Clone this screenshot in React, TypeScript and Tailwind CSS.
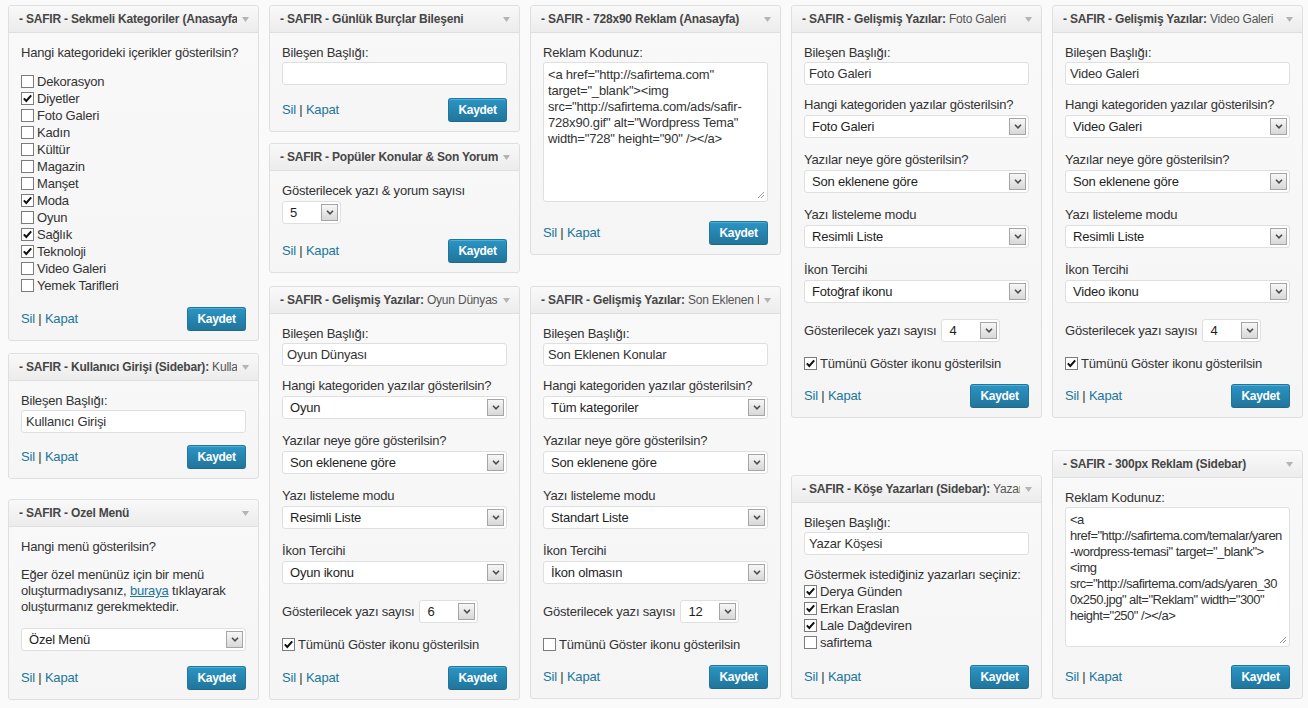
import React from "react";

function Arrow() {
  return (
    <svg width="7" height="5" viewBox="0 0 7 5" className="ml-[5px] shrink-0">
      <polygon points="0,0 7,0 3.5,5" fill="#b4b4b4" />
    </svg>
  );
}

function Panel({
  title,
  sub,
  className,
  children,
}: {
  title: string;
  sub?: string;
  className: string;
  children: React.ReactNode;
}) {
  return (
    <div
      className={`flex flex-col rounded-[3px] border border-[#dfdfdf] bg-linear-to-t from-[#f5f5f5] to-[#f9f9f9] ${className}`}
    >
      <div className="flex h-[27px] shrink-0 items-center rounded-t-[3px] border-b border-[#dfdfdf] bg-linear-to-b from-[#f9f9f9] to-[#ececec] pl-[10px] pr-[9px]">
        <div className="flex-1 overflow-hidden whitespace-nowrap text-[12px] font-bold tracking-[-0.2px] text-[#464646]">
          {title}
          {sub && <span className="font-normal text-[#555]"> {sub}</span>}
        </div>
        <Arrow />
      </div>
      <div className="flex flex-1 flex-col px-[12px] pb-[9px] pt-[11px]">{children}</div>
    </div>
  );
}

function Label({ children, className = "" }: { children: React.ReactNode; className?: string }) {
  return <div className={`h-[17px] whitespace-nowrap leading-[17px] ${className}`}>{children}</div>;
}

function Input({ value }: { value: string }) {
  return (
    <div className="h-[23px] rounded-[3px] border border-[#dfdfdf] bg-white pl-[4px] leading-[21px] text-[#333]">
      {value}
    </div>
  );
}

function Select({ value, className = "w-full" }: { value: string; className?: string }) {
  return (
    <div
      className={`flex h-[23px] items-center rounded-[3px] border border-[#dfdfdf] bg-white pl-[7px] pr-[2px] ${className}`}
    >
      <span className="flex-1 overflow-hidden whitespace-nowrap text-[#1e1e1e]">{value}</span>
      <span className="flex h-[17px] w-[17px] shrink-0 items-center justify-center border border-[#a5a5a5] bg-linear-to-b from-[#f7f7f7] to-[#d8d8d8]">
        <svg width="8" height="5" viewBox="0 0 8 5">
          <path d="M1 0.8 L4 3.8 L7 0.8" fill="none" stroke="#4b4b4b" strokeWidth="1.6" />
        </svg>
      </span>
    </div>
  );
}

function Check({ checked, label }: { checked?: boolean; label: string }) {
  return (
    <div className="flex h-[17px] items-center whitespace-nowrap">
      <span className="mr-[3px] flex h-[13px] w-[13px] shrink-0 items-center justify-center border border-[#7c7c7c] bg-white">
        {checked && (
          <svg width="11" height="11" viewBox="0 0 11 11">
            <path d="M1.8 5.4 L4.3 8 L9.2 2.4" fill="none" stroke="#111" strokeWidth="2" />
          </svg>
        )}
      </span>
      <span>{label}</span>
    </div>
  );
}

function TextField({ label, value }: { label: string; value: string }) {
  return (
    <div className="mb-[11px]">
      <Label>{label}</Label>
      <div className="mt-[1px]">
        <Input value={value} />
      </div>
    </div>
  );
}

function SelectField({ label, value }: { label: string; value: string }) {
  return (
    <div className="mb-[13px]">
      <Label>{label}</Label>
      <div className="mt-[2px]">
        <Select value={value} />
      </div>
    </div>
  );
}

function Footer() {
  return (
    <div className="mt-auto flex items-center justify-between">
      <div>
        <span className="text-[#21759b]">Sil</span> | <span className="text-[#21759b]">Kapat</span>
      </div>
      <button className="h-[24px] w-[59px] rounded-[3px] border border-[#21759b] border-b-[#1e6a8d] bg-linear-to-b from-[#2a95c5] to-[#21759b] text-[12px] font-bold tracking-[-0.3px] text-white shadow-[inset_0_1px_0_rgba(120,200,230,0.5)]">
        Kaydet
      </button>
    </div>
  );
}

function CodeBox({ lines, tight }: { lines: string[]; tight?: boolean }) {
  return (
    <div
      className={`relative h-[140px] overflow-hidden rounded-[3px] border border-[#dfdfdf] bg-white px-[4px] pt-[4px] leading-[16px] text-[#333] ${
        tight ? "tracking-[-0.5px]" : ""
      }`}
    >
      {lines.map((l, i) => (
        <div key={i} className="whitespace-pre">
          {l}
        </div>
      ))}
      <svg width="8" height="8" viewBox="0 0 8 8" className="absolute bottom-[2px] right-[2px]">
        <path d="M7 1 L1 7 M7 4 L4 7" stroke="#9a9a9a" strokeWidth="1" />
      </svg>
    </div>
  );
}

function Advanced({
  sub,
  className,
  title,
  cat,
  mode,
  icon,
  count,
  all,
}: {
  sub: string;
  className: string;
  title: string;
  cat: string;
  mode: string;
  icon: string;
  count: string;
  all: boolean;
}) {
  return (
    <Panel title="- SAFIR - Gelişmiş Yazılar:" sub={sub} className={className}>
      <TextField label="Bileşen Başlığı:" value={title} />
      <SelectField label="Hangi kategoriden yazılar gösterilsin?" value={cat} />
      <SelectField label="Yazılar neye göre gösterilsin?" value="Son eklenene göre" />
      <SelectField label="Yazı listeleme modu" value={mode} />
      <SelectField label="İkon Tercihi" value={icon} />
      <div className="mt-[3px] flex h-[23px] items-center">
        <span className="whitespace-nowrap">Gösterilecek yazı sayısı</span>
        <Select value={count} className="ml-[5px] w-[59px]" />
      </div>
      <div className="mt-[13px]">
        <Check checked={all} label="Tümünü Göster ikonu gösterilsin" />
      </div>
      <Footer />
    </Panel>
  );
}

const categories: [string, boolean][] = [
  ["Dekorasyon", false],
  ["Diyetler", true],
  ["Foto Galeri", false],
  ["Kadın", false],
  ["Kültür", false],
  ["Magazin", false],
  ["Manşet", false],
  ["Moda", true],
  ["Oyun", false],
  ["Sağlık", true],
  ["Teknoloji", true],
  ["Video Galeri", false],
  ["Yemek Tarifleri", false],
];

export default function App() {
  return (
    <div className="h-[708px] w-[1308px] overflow-hidden bg-[#fafafa] font-['Liberation_Sans',Arial,sans-serif] text-[13px] tracking-[-0.2px] text-[#333]">
      <div className="grid grid-cols-[251px_251px_251px_251px_251px] items-start gap-x-[10px] pl-[8px]">
        {/* column 1 */}
        <div className="flex flex-col">
          <Panel title="- SAFIR - Sekmeli Kategoriler (Anasayfa)" className="mt-[5px] h-[336px]">
            <Label>Hangi kategorideki içerikler gösterilsin?</Label>
            <div className="mt-[12px]">
              {categories.map(([name, on]) => (
                <Check key={name} checked={on} label={name} />
              ))}
            </div>
            <Footer />
          </Panel>
          <Panel
            title="- SAFIR - Kullanıcı Girişi (Sidebar):"
            sub="Kullanıcı Girişi"
            className="mt-[12px] h-[126px]"
          >
            <TextField label="Bileşen Başlığı:" value="Kullanıcı Girişi" />
            <Footer />
          </Panel>
          <Panel title="- SAFIR - Ozel Menü" className="mt-[20px] h-[201px]">
            <Label>Hangi menü gösterilsin?</Label>
            <p className="mt-[12px] leading-[16px]">
              Eğer özel menünüz için bir menü
              <br />
              oluşturmadıysanız, <span className="text-[#21759b] underline">buraya</span> tıklayarak
              <br />
              oluşturmanız gerekmektedir.
            </p>
            <div className="mt-[13px]">
              <Select value="Özel Menü" />
            </div>
            <Footer />
          </Panel>
        </div>

        {/* column 2 */}
        <div className="flex flex-col">
          <Panel title="- SAFIR - Günlük Burçlar Bileşeni" className="mt-[5px] h-[127px]">
            <TextField label="Bileşen Başlığı:" value="" />
            <Footer />
          </Panel>
          <Panel title="- SAFIR - Popüler Konular & Son Yorumlar" className="mt-[11px] h-[130px]">
            <Label>Gösterilecek yazı &amp; yorum sayısı</Label>
            <div className="mt-[2px]">
              <Select value="5" className="w-[59px]" />
            </div>
            <Footer />
          </Panel>
          <Advanced
            sub="Oyun Dünyası"
            className="mt-[13px] h-[414px]"
            title="Oyun Dünyası"
            cat="Oyun"
            mode="Resimli Liste"
            icon="Oyun ikonu"
            count="6"
            all
          />
        </div>

        {/* column 3 */}
        <div className="flex flex-col">
          <Panel title="- SAFIR - 728x90 Reklam (Anasayfa)" className="mt-[5px] h-[250px]">
            <Label>Reklam Kodunuz:</Label>
            <div className="mt-[1px]">
              <CodeBox
                lines={[
                  '<a href="http://safirtema.com"',
                  'target="_blank"><img',
                  'src="http://safirtema.com/ads/safir-',
                  '728x90.gif" alt="Wordpress Tema"',
                  'width="728" height="90" /></a>',
                ]}
              />
            </div>
            <Footer />
          </Panel>
          <Advanced
            sub="Son Eklenen Konular"
            className="mt-[31px] h-[413px]"
            title="Son Eklenen Konular"
            cat="Tüm kategoriler"
            mode="Standart Liste"
            icon="İkon olmasın"
            count="12"
            all={false}
          />
        </div>

        {/* column 4 */}
        <div className="flex flex-col">
          <Advanced
            sub="Foto Galeri"
            className="mt-[5px] h-[413px]"
            title="Foto Galeri"
            cat="Foto Galeri"
            mode="Resimli Liste"
            icon="Fotoğraf ikonu"
            count="4"
            all
          />
          <Panel
            title="- SAFIR - Köşe Yazarları (Sidebar):"
            sub="Yazar Köşesi"
            className="mt-[57px] h-[224px]"
          >
            <TextField label="Bileşen Başlığı:" value="Yazar Köşesi" />
            <Label>Göstermek istediğiniz yazarları seçiniz:</Label>
            <Check checked label="Derya Günden" />
            <Check checked label="Erkan Eraslan" />
            <Check checked label="Lale Dağdeviren" />
            <Check label="safirtema" />
            <Footer />
          </Panel>
        </div>

        {/* column 5 */}
        <div className="flex flex-col">
          <Advanced
            sub="Video Galeri"
            className="mt-[5px] h-[413px]"
            title="Video Galeri"
            cat="Video Galeri"
            mode="Resimli Liste"
            icon="Video ikonu"
            count="4"
            all
          />
          <Panel title="- SAFIR - 300px Reklam (Sidebar)" className="mt-[32px] h-[249px]">
            <Label>Reklam Kodunuz:</Label>
            <div className="mt-[1px]">
              <CodeBox
                tight
                lines={[
                  "<a",
                  'href="http://safirtema.com/temalar/yaren',
                  '-wordpress-temasi" target="_blank">',
                  "<img",
                  'src="http://safirtema.com/ads/yaren_30',
                  '0x250.jpg" alt="Reklam" width="300"',
                  'height="250" /></a>',
                ]}
              />
            </div>
            <Footer />
          </Panel>
        </div>
      </div>
    </div>
  );
}
